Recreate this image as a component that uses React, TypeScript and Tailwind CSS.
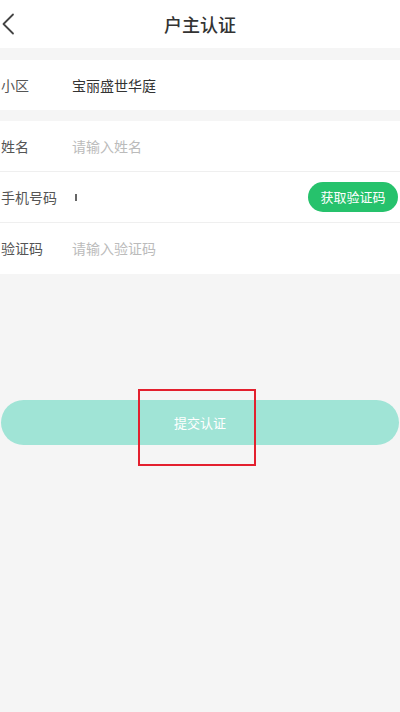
import React from "react";

const font = { fontFamily: '"Noto Sans CJK SC", "Noto Sans", sans-serif' };

function Row({ label, children, border = false }: { label: string; children: React.ReactNode; border?: boolean }) {
  return (
    <div className={`flex h-[51px] items-center bg-white ${border ? "border-b border-[#efefef]" : ""}`}>
      <span className="w-[72px] shrink-0 pl-[1px] text-[14px] text-[#555]">{label}</span>
      <div className="flex flex-1 items-center">{children}</div>
    </div>
  );
}

export default function App() {
  return (
    <div className="flex min-h-[712px] w-[400px] flex-col bg-[#f5f5f5]" style={font}>
      {/* header */}
      <div className="relative flex h-[48px] items-center justify-center bg-white">
        <svg className="absolute left-[1px] top-[13px]" width="14" height="22" viewBox="0 0 14 22" fill="none">
          <path d="M12 1.5 L2.5 11 L12 20.5" stroke="#444" strokeWidth="1.8" strokeLinecap="round" strokeLinejoin="round" />
        </svg>
        <span className="text-[18px] font-medium text-[#333]">户主认证</span>
      </div>

      <div className="mt-[12px] bg-white">
        <div className="flex h-[50px] items-center bg-white">
          <span className="w-[72px] shrink-0 pl-[1px] text-[14px] text-[#555]">小区</span>
          <span className="text-[14px] text-[#333]">宝丽盛世华庭</span>
        </div>
      </div>

      <div className="mt-[11px] bg-white">
        <Row label="姓名" border>
          <span className="text-[14px] text-[#bbb]">请输入姓名</span>
        </Row>
        <Row label="手机号码" border>
          <span className="ml-[3px] h-[7px] w-[2px] bg-[#666]" />
          <button className="ml-auto mr-[2px] h-[30px] w-[90px] rounded-full bg-[#26c26c] text-[13px] text-white">
            获取验证码
          </button>
        </Row>
        <Row label="验证码">
          <span className="text-[14px] text-[#bbb]">请输入验证码</span>
        </Row>
      </div>

      <div className="relative mt-[126px] px-[1px]">
        <button className="flex h-[45px] w-full items-center justify-center rounded-full bg-[#a0e4d6] text-[13px] text-white">
          提交认证
        </button>
        <div className="pointer-events-none absolute left-[138px] top-[-11px] h-[77px] w-[118px] border-2 border-[#e3202e]" />
      </div>
    </div>
  );
}
